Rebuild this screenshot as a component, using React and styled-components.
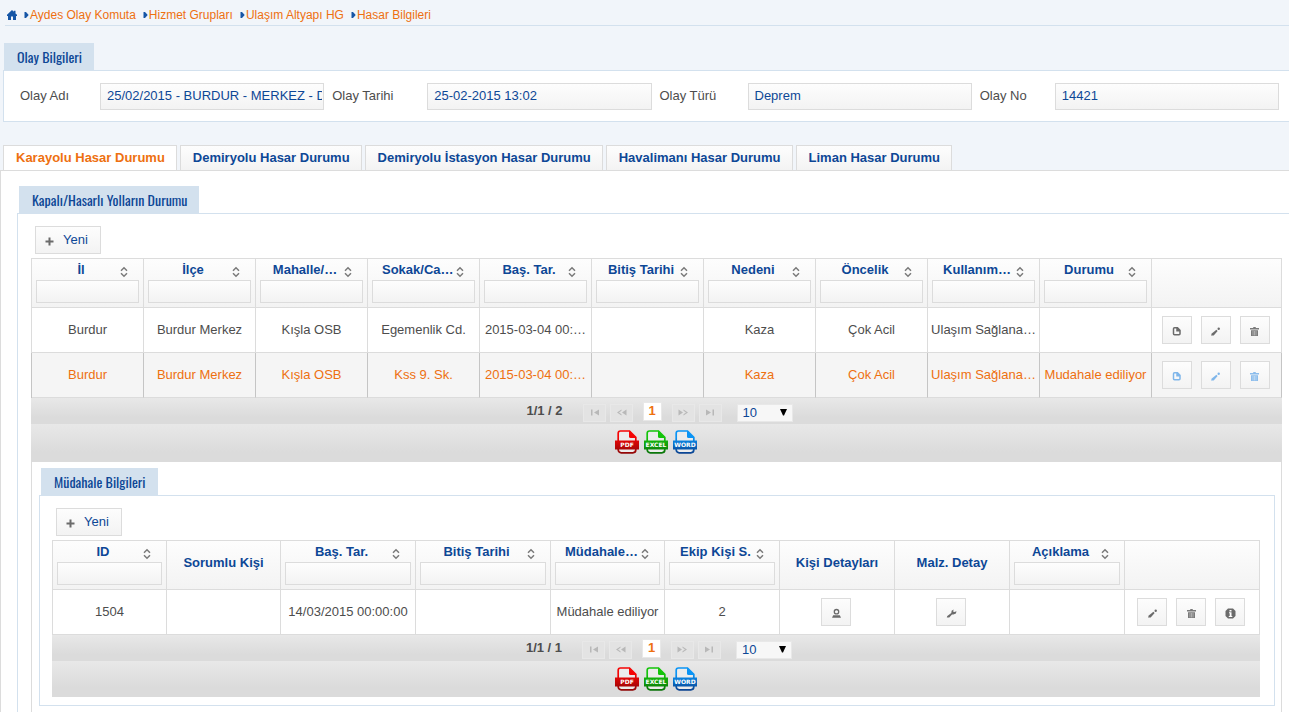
import { useId } from 'react';
import styled, { createGlobalStyle, css } from 'styled-components';

const GlobalStyle = createGlobalStyle`
  * {
    box-sizing: border-box;
  }
  body {
    margin: 0;
    background: #fff;
    color: #4d4d4d;
    font-family: Arial, 'Liberation Sans', sans-serif;
    font-size: 13px;
    line-height: 16px;
  }
  button, input, select {
    font: inherit;
    margin: 0;
  }
`;

const crumbs = ['Aydes Olay Komuta', 'Hizmet Grupları', 'Ulaşım Altyapı HG', 'Hasar Bilgileri'];

const eventFields = [
  { label: 'Olay Adı', value: '25/02/2015 - BURDUR - MERKEZ - DEPREM' },
  { label: 'Olay Tarihi', value: '25-02-2015 13:02' },
  { label: 'Olay Türü', value: 'Deprem' },
  { label: 'Olay No', value: '14421' },
];

const tabs = [
  'Karayolu Hasar Durumu',
  'Demiryolu Hasar Durumu',
  'Demiryolu İstasyon Hasar Durumu',
  'Havalimanı Hasar Durumu',
  'Liman Hasar Durumu',
];

const roadColumns = [
  { title: 'İl', filter: true },
  { title: 'İlçe', filter: true },
  { title: 'Mahalle/…', filter: true },
  { title: 'Sokak/Ca…', filter: true },
  { title: 'Baş. Tar.', filter: true },
  { title: 'Bitiş Tarihi', filter: true },
  { title: 'Nedeni', filter: true },
  { title: 'Öncelik', filter: true },
  { title: 'Kullanım…', filter: true },
  { title: 'Durumu', filter: true },
  { title: '', width: 130 },
];

const roadActions = [
  { icon: 'document', label: 'Görüntüle' },
  { icon: 'pencil', label: 'Düzenle' },
  { icon: 'trash', label: 'Sil' },
];

const roadRows = [
  {
    cells: ['Burdur', 'Burdur Merkez', 'Kışla OSB', 'Egemenlik Cd.', '2015-03-04 00:…', '', 'Kaza', 'Çok Acil', 'Ulaşım Sağlana…', '', roadActions],
  },
  {
    selected: true,
    cells: ['Burdur', 'Burdur Merkez', 'Kışla OSB', 'Kss 9. Sk.', '2015-03-04 00:…', '', 'Kaza', 'Çok Acil', 'Ulaşım Sağlana…', 'Mudahale ediliyor', roadActions],
  },
];

const responseColumns = [
  { title: 'ID', filter: true, width: 114 },
  { title: 'Sorumlu Kişi', width: 114 },
  { title: 'Baş. Tar.', filter: true, width: 135 },
  { title: 'Bitiş Tarihi', filter: true, width: 135 },
  { title: 'Müdahale…', filter: true, width: 114 },
  { title: 'Ekip Kişi S.', filter: true },
  { title: 'Kişi Detayları' },
  { title: 'Malz. Detay' },
  { title: 'Açıklama', filter: true },
  { title: '', width: 135 },
];

const responseRows = [
  {
    cells: [
      '1504',
      '',
      '14/03/2015 00:00:00',
      '',
      'Müdahale ediliyor',
      '2',
      [{ icon: 'person', label: 'Kişi Detayları' }],
      [{ icon: 'wrench', label: 'Malzeme Detayı' }],
      '',
      [
        { icon: 'pencil', label: 'Düzenle' },
        { icon: 'trash', label: 'Sil' },
        { icon: 'info', label: 'Bilgi' },
      ],
    ],
  },
];

const glyphs = {
  document: (
    <path d="M3.500 1.800h3L9 4.300v3.500a1 1 0 0 1-1 1H3.500a1 1 0 0 1-1-1v-5a1 1 0 0 1 1-1z M6 1.800v3h3" fill="none" stroke="currentColor" strokeWidth="1.500" />
  ),
  pencil: (
    <>
      <path d="M1 9.500l.8-2 4.600-3.700 1.200 1.200L3.700 9.500z" fill="currentColor" />
      <circle cx="8.700" cy="2.700" r="1.200" fill="currentColor" />
    </>
  ),
  trash: (
    <>
      <path d="M1 2h3l.5-1h2l.5 1h3v1.500H1z M2 4.300h7V10H2z" fill="currentColor" opacity=".9" />
      <path d="M4 5v4.500M5.500 5v4.500M7 5v4.500" stroke="#fff" strokeWidth=".4" />
    </>
  ),
  person: (
    <>
      <circle cx="5.500" cy="3.700" r="2.200" fill="none" stroke="currentColor" strokeWidth="1.300" />
      <path d="M1 9.800l1.200-2.600h6.600L10 9.800z" fill="currentColor" />
    </>
  ),
  wrench: (
    <path d="M.8 9.500L1.300 8l4-3 .3-2.300L7.700 1.500l-.6 1.900 1.200.6L10.500 3.300 9.900 5.500 7.400 6.500 6 6.400 3.300 9.500z" fill="currentColor" />
  ),
  info: (
    <>
      <path d="M3 .5h5L10.500 3v5L8 10.500H3L.5 8V3z" fill="currentColor" />
      <path d="M4.500 2h2v1.500h-2z M4 4.300h2.500V8h.8v1H3.800V8h.9V5.300H4z" fill="#fff" />
    </>
  ),
  plus: <path d="M5.500 1.500v8M1.500 5.500h8" stroke="currentColor" strokeWidth="2" />,
  first: <path d="M2 2.500h1.500v6H2z M10 2.500v6L5 5.500z" fill="currentColor" />,
  prev: <path d="M5.500 2.500v1.300L3 5.500l2.500 1.700v1.300L1 5.500z M10.500 2.500v6L6 5.500z" fill="currentColor" />,
  next: <path d="M5.500 2.500v1.300L8 5.500 5.500 7.200v1.300L10 5.500z M.5 2.500v6L5 5.500z" fill="currentColor" />,
  last: <path d="M7.500 2.500H9v6H7.500z M1 2.500v6l5-3z" fill="currentColor" />,
};

const Icon = ({ name }) => (
  <svg width="11" height="11" viewBox="0 0 11 11" aria-hidden="true">
    {glyphs[name]}
  </svg>
);

const HomeIcon = () => (
  <svg width="10" height="10" viewBox="0 0 10 10" aria-hidden="true">
    <path d="M5 0L0 4.800V6h1v4h3V6.500h2V10h3V6h1V4.800L8.500 3.400V.8H6.800v1z" fill="#1656a6" />
  </svg>
);

const CrumbArrow = () => (
  <svg width="5" height="8" viewBox="0 0 5 8" aria-hidden="true">
    <path d="M.5 1H2l2.700 3L2 7H.5z" fill="#1656a6" />
  </svg>
);

const SortIcon = () => (
  <svg width="16" height="16" viewBox="0 0 16 16" aria-hidden="true">
    <path d="M5 6.800L8 3.800l3 3M5 9.200l3 3 3-3" fill="none" stroke="#7a7a7a" strokeWidth="1.500" />
  </svg>
);

const FileIcon = ({ label, light, dark }) => {
  const id = useId();
  return (
    <svg width="24" height="24" viewBox="0 0 24 24" aria-hidden="true">
      <defs>
        <linearGradient id={id} x1="0" y1="0" x2="0" y2="24" gradientUnits="userSpaceOnUse">
          <stop offset="0.300" stopColor={light} />
          <stop offset="1" stopColor={dark} />
        </linearGradient>
      </defs>
      <path
        d="M5.500 1h9L20.800 7.300v12.500a3 3 0 0 1-3 3H6.200a3 3 0 0 1-3-3V3.300A2.300 2.300 0 0 1 5.500 1z"
        fill="#ececec"
        stroke={`url(#${id})`}
        strokeWidth="1.700"
      />
      <path d="M14 .8L21.300 8H15.500A1.500 1.500 0 0 1 14 6.500z" fill={light} />
      <rect x="0" y="10.500" width="24" height="9" fill={`url(#${id})`} />
      <text
        x="12"
        y="17.300"
        textAnchor="middle"
        fontFamily="'DejaVu Sans', sans-serif"
        fontWeight="700"
        fontSize="6"
        fill="#fff"
      >
        {label}
      </text>
    </svg>
  );
};

const exportsList = [
  { label: 'PDF', light: '#f50505', dark: '#8c0808' },
  { label: 'EXCEL', light: '#14c40a', dark: '#0a700a' },
  { label: 'WORD', light: '#0a94f5', dark: '#0a3f8c' },
];

const ActionButtons = ({ items, selected }) => (
  <Actions>
    {items.map(({ icon, label }) => (
      <IconButton key={icon} type="button" aria-label={label} $selected={selected}>
        <Icon name={icon} />
      </IconButton>
    ))}
  </Actions>
);

const NewButton = () => (
  <TextButton type="button">
    <Icon name="plus" />
    <span>Yeni</span>
  </TextButton>
);

const DataTable = ({ columns, rows }) => (
  <Table>
    <colgroup>
      {columns.map(({ width }, i) => (
        <Col key={i} $width={width} />
      ))}
    </colgroup>
    <thead>
      <tr>
        {columns.map(({ title, filter }, i) => (
          <HeadCell key={i} scope="col">
            {filter ? (
              <>
                <HeadTitle>
                  <span>{title}</span>
                  <SortIcon />
                </HeadTitle>
                <FilterInput type="text" aria-label={title} />
              </>
            ) : (
              <HeadLabel>{title}</HeadLabel>
            )}
          </HeadCell>
        ))}
      </tr>
    </thead>
    <tbody>
      {rows.map(({ cells, selected }, r) => (
        <Row key={r} $selected={selected}>
          {cells.map((cell, c) => (
            <td key={c}>
              {Array.isArray(cell) ? <ActionButtons items={cell} selected={selected} /> : cell}
            </td>
          ))}
        </Row>
      ))}
    </tbody>
  </Table>
);

const TableFooter = ({ total, compact }) => (
  <>
    <Paginator>
      <PageInfo>1/1 / {total}</PageInfo>
      <PageGroup>
        <PageButton type="button" disabled aria-label="İlk sayfa"><Icon name="first" /></PageButton>
        <PageButton type="button" disabled aria-label="Önceki sayfa"><Icon name="prev" /></PageButton>
      </PageGroup>
      <CurrentPage type="button">1</CurrentPage>
      <PageGroup>
        <PageButton type="button" disabled aria-label="Sonraki sayfa"><Icon name="next" /></PageButton>
        <PageButton type="button" disabled aria-label="Son sayfa"><Icon name="last" /></PageButton>
      </PageGroup>
      <SelectBox>
        <select aria-label="Sayfa başına kayıt" defaultValue="10">
          <option>10</option>
          <option>20</option>
          <option>50</option>
        </select>
        <svg width="7" height="7" viewBox="0 0 7 7" aria-hidden="true">
          <path d="M0 0h7L4 6.500H3z" fill="#000" />
        </svg>
      </SelectBox>
    </Paginator>
    <ExportBar $compact={compact}>
      {exportsList.map((item) => (
        <ExportButton key={item.label} type="button" aria-label={item.label}>
          <FileIcon {...item} />
        </ExportButton>
      ))}
    </ExportBar>
  </>
);

const App = () => {
  return (
    <>
      <GlobalStyle />
      <TopArea>
        <Breadcrumb aria-label="Sayfa yolu">
          <a href="#home" aria-label="Ana sayfa"><HomeIcon /></a>
          {crumbs.map((crumb) => (
            <Crumb key={crumb} href="#crumb">
              <CrumbArrow />
              {crumb}
            </Crumb>
          ))}
        </Breadcrumb>
        <section>
          <Legend>Olay Bilgileri</Legend>
          <EventForm>
            {eventFields.map(({ label, value }, i) => (
              <EventField key={label}>
                <label htmlFor={`event-${i}`}>{label}</label>
                <input id={`event-${i}`} type="text" readOnly value={value} />
              </EventField>
            ))}
          </EventForm>
        </section>
        <TabList role="tablist">
          {tabs.map((tab, i) => (
            <Tab key={tab} type="button" role="tab" aria-selected={i === 0} $active={i === 0}>
              {tab}
            </Tab>
          ))}
        </TabList>
      </TopArea>
      <TabPanel role="tabpanel">
        <Legend>Kapalı/Hasarlı Yolların Durumu</Legend>
        <RoadPanel>
          <NewButton />
          <DataTable columns={roadColumns} rows={roadRows} />
          <TableFooter total={2} />
          <RowDetail>
            <Legend>Müdahale Bilgileri</Legend>
            <ResponsePanel>
              <NewButton />
              <DataTable columns={responseColumns} rows={responseRows} />
              <TableFooter total={1} compact />
            </ResponsePanel>
          </RowDetail>
        </RoadPanel>
      </TabPanel>
    </>
  );
};

export default App;

const lightGradient = css`
  background: linear-gradient(#fdfdfd, #f3f3f3);
`;

const darkGradient = css`
  background: linear-gradient(#e8e8e8, #dbdbdb 75%);
`;

const TopArea = styled.header`
  background: #f1f5fa;
`;

const Breadcrumb = styled.nav`
  display: flex;
  align-items: center;
  gap: 7px;
  height: 26px;
  margin: 0 0 17px 5px;
  padding: 4px 2px 0;
  border-bottom: 1px solid #d3e1ee;
  a {
    display: flex;
  }
`;

const Crumb = styled.a`
  align-items: center;
  gap: 1px;
  font-size: 12px;
  color: #ee7010;
  text-decoration: none;
`;

const Legend = styled.h2`
  width: fit-content;
  height: 27px;
  margin: 0 0 0 2px;
  padding: 0 12px 0 13px;
  background: #d3e1ee;
  color: #0d4796;
  font-family: Oswald, 'Liberation Sans Narrow', 'Liberation Sans', sans-serif;
  font-size: 14px;
  font-weight: 400;
  line-height: 28px;
  white-space: nowrap;
  header & {
    margin-left: 4px;
  }
`;

const EventForm = styled.form`
  display: grid;
  grid-template-columns: 88px 1fr 103px 1fr 96px 1fr 83px 1fr;
  margin-left: 3px;
  padding: 12px 10px 11px 8px;
  background: #fff;
  border: 1px solid #d3e1ee;
  border-right: 0;
`;

const EventField = styled.div`
  display: contents;
  label {
    padding-left: 8px;
    line-height: 25px;
  }
  input {
    ${lightGradient}
    min-width: 0;
    width: 100%;
    height: 27px;
    padding: 0 1px 2px 6px;
    border: 1px solid #dcdcdc;
    color: #0d4796;
  }
`;

const TabList = styled.div`
  display: flex;
  gap: 3px;
  padding: 23px 3px 0;
  box-shadow: inset 0 -1px #dcdcdc;
`;

const Tab = styled.button`
  ${lightGradient}
  height: 26px;
  padding: 0 11px 0 12px;
  border: 1px solid #dcdcdc;
  color: #0d4796;
  font-weight: 700;
  white-space: nowrap;
  ${({ $active }) => $active && css`
    background: #fff;
    color: #ee7010;
  `}
`;

const TabPanel = styled.main`
  padding: 15px 0 0 16px;
  background: #fff;
  border-left: 1px solid #dcdcdc;
`;

const RoadPanel = styled.section`
  padding: 12px 7px 0 13px;
  border: 1px solid #d3e1ee;
  border-width: 1px 0 0 1px;
`;

const RowDetail = styled.section`
  padding: 6px 6px 6px 7px;
  border: 1px solid #dcdcdc;
  border-width: 0 1px;
`;

const ResponsePanel = styled.div`
  padding: 12px 14px 8px 12px;
  border: 1px solid #d3e1ee;
`;

const TextButton = styled.button`
  ${lightGradient}
  display: flex;
  align-items: center;
  gap: 8px;
  height: 28px;
  margin: 0 0 4px 4px;
  padding: 0 12px 0 8px;
  border: 1px solid #dcdcdc;
  color: #0d4796;
  svg {
    color: #6b6b6b;
    margin-top: 2px;
  }
`;

const Table = styled.table`
  width: 100%;
  table-layout: fixed;
  border-collapse: separate;
  border-spacing: 0;
  border: 1px solid #dcdcdc;
  border-width: 1px 0 0 1px;
`;

const Col = styled.col`
  width: ${({ $width }) => ($width ? `${$width}px` : 'auto')};
`;

const HeadCell = styled.th`
  ${lightGradient}
  height: 49px;
  padding: 3px 4px 4px;
  border: 1px solid #dcdcdc;
  border-width: 0 1px 1px 0;
  color: #0d4796;
  white-space: nowrap;
`;

const HeadLabel = styled.div`
  padding-bottom: 3px;
`;

const HeadTitle = styled.div`
  display: flex;
  height: 18px;
  padding: 0 7px 0 10px;
  line-height: 15px;
  span {
    flex: 1;
    min-width: 0;
  }
  svg {
    flex: none;
    align-self: flex-end;
  }
`;

const FilterInput = styled.input`
  ${lightGradient}
  display: block;
  width: 100%;
  height: 23px;
  padding: 0 4px;
  border: 1px solid #dcdcdc;
  font-weight: 400;
  color: #0d4796;
`;

const Row = styled.tr`
  td {
    height: 45px;
    padding: 0;
    border: 1px solid #dcdcdc;
    border-width: 0 1px 1px 0;
    text-align: center;
    white-space: nowrap;
  }
  ${({ $selected }) => $selected && css`
    background: #f5f5f5;
    color: #ee7010;
    td {
      border-right-color: #c5c5c5;
    }
    td:first-child {
      box-shadow: -1px 0 #c5c5c5;
    }
  `}
`;

const Actions = styled.div`
  display: flex;
  justify-content: center;
  gap: 9px;
  padding-right: 2px;
`;

const IconButton = styled.button`
  ${lightGradient}
  display: flex;
  align-items: center;
  justify-content: center;
  width: 30px;
  height: 28px;
  padding: 2px 0 0;
  border: 1px solid #dcdcdc;
  color: ${({ $selected }) => ($selected ? '#7fb6ea' : '#6b6b6b')};
`;

const Paginator = styled.div`
  ${darkGradient}
  display: flex;
  align-items: center;
  justify-content: center;
  gap: 10px;
  height: 26px;
  padding-left: 6px;
`;

const PageInfo = styled.span`
  margin-right: 10px;
  font-weight: 700;
`;

const PageGroup = styled.div`
  display: flex;
  gap: 4px;
`;

const PageButton = styled.button`
  display: flex;
  align-items: center;
  justify-content: center;
  width: 23px;
  height: 18px;
  margin-top: 3px;
  padding: 0;
  border: 1px solid #e8e8e8;
  background: #e3e3e3;
  color: #b8b8b8;
`;

const CurrentPage = styled.button`
  width: 19px;
  height: 19px;
  padding: 0;
  background: #fff;
  border: 1px solid #e8e8e8;
  color: #ee7010;
  font-weight: 700;
  line-height: 16px;
`;

const SelectBox = styled.div`
  position: relative;
  margin: 3px 0 0 5px;
  select {
    display: block;
    appearance: none;
    width: 56px;
    height: 18px;
    padding: 0 5px;
    border: 1px solid #e8e8e8;
    border-radius: 0;
    background: #f7f7f7;
    color: #0d4796;
  }
  svg {
    position: absolute;
    right: 6px;
    top: 5px;
    pointer-events: none;
  }
`;

const ExportBar = styled.div`
  ${darkGradient}
  display: flex;
  justify-content: center;
  gap: 5px;
  padding: ${({ $compact }) => ($compact ? '6px 1px 6px 0' : '6px 1px 8px 0')};
`;

const ExportButton = styled.button`
  display: flex;
  padding: 0;
  border: 0;
  background: none;
`;
